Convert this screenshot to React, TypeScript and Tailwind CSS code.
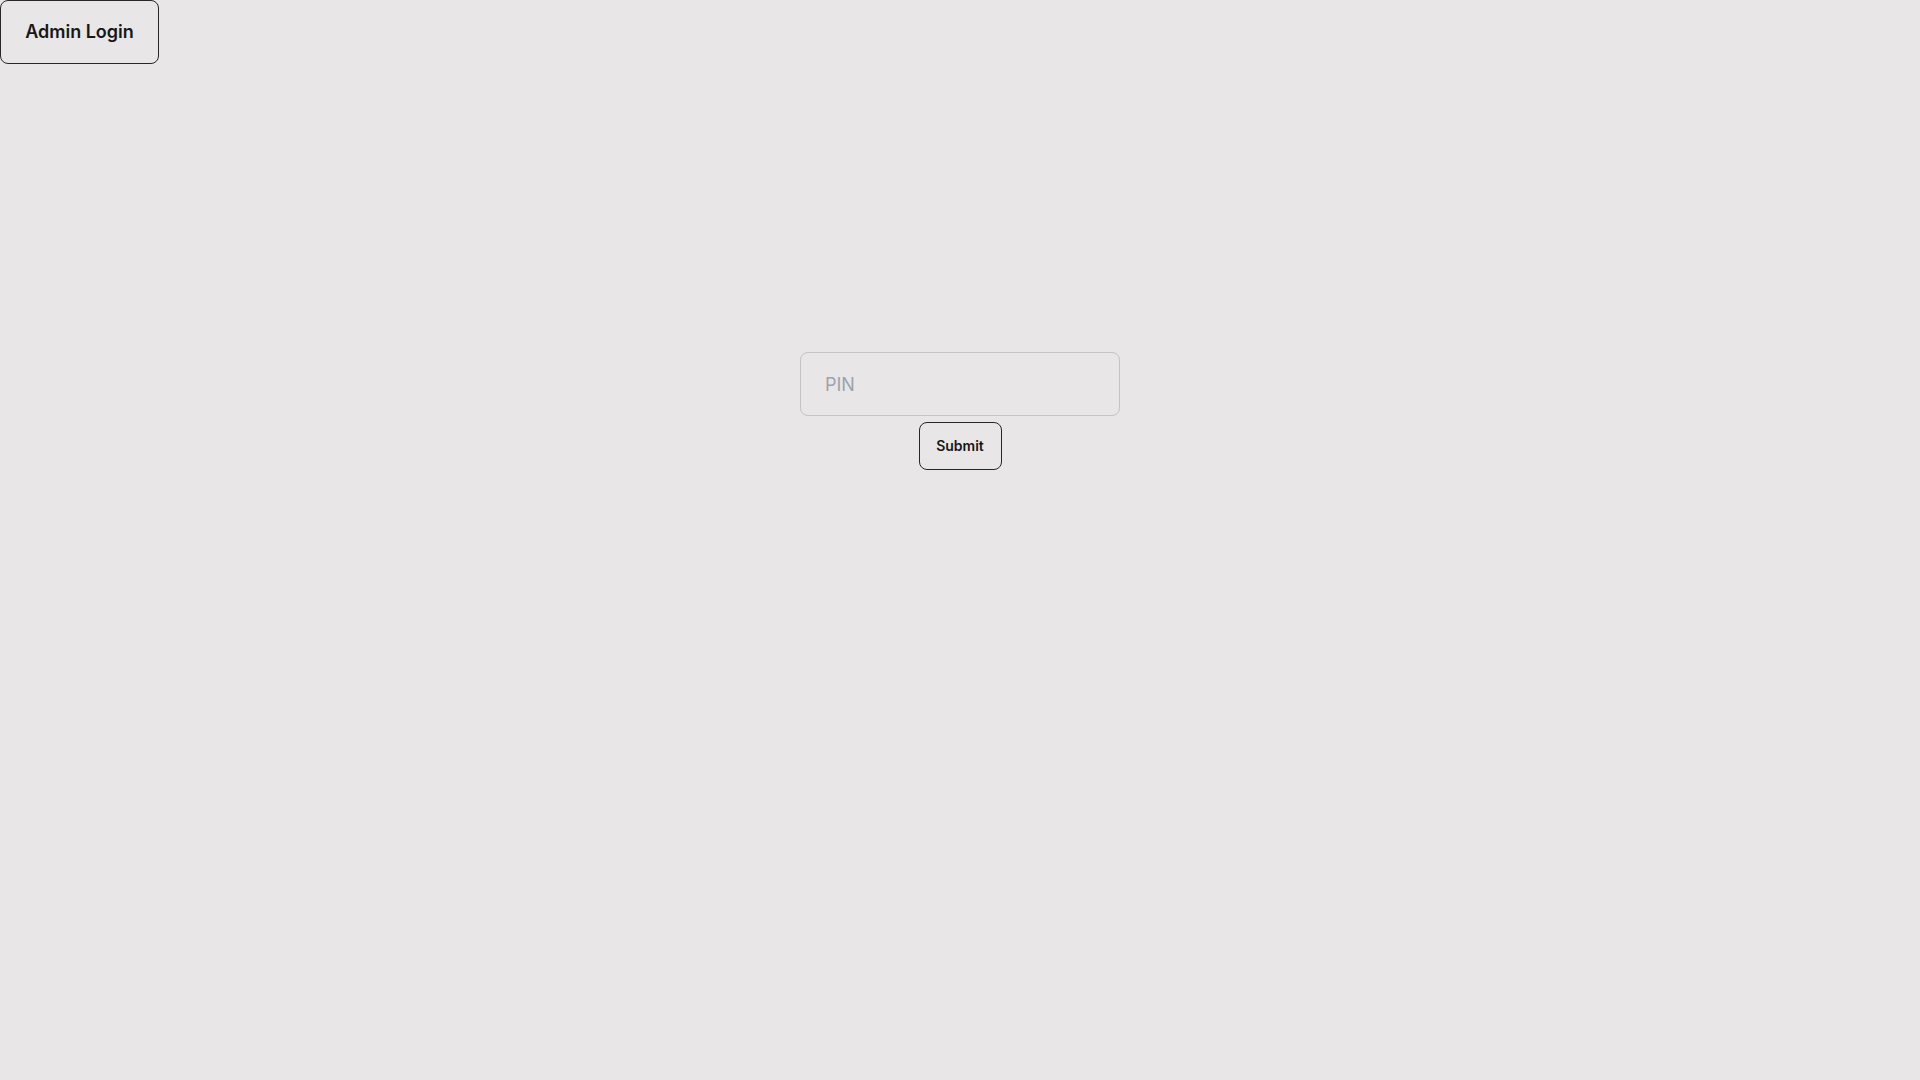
export default function App() {
  return (
    <div className="min-h-screen w-full bg-[#e8e6e7] text-[#171717]" style={{ fontFamily: 'Inter, "Noto Sans", sans-serif' }}>
      <button className="flex items-center justify-center h-16 w-[159px] border border-[#262626] rounded-lg text-lg font-semibold leading-7 bg-transparent">
        Admin Login
      </button>
      <div className="mt-[288px] flex flex-col items-center gap-[6px]">
        <input
          type="text"
          placeholder="PIN"
          className="w-80 h-16 px-6 border border-[#c4c2c3] rounded-lg bg-transparent text-lg placeholder:text-[#9ca3af] outline-none"
        />
        <button className="flex items-center justify-center h-12 w-[83px] border border-[#262626] rounded-lg text-sm font-semibold bg-transparent">
          Submit
        </button>
      </div>
    </div>
  );
}
